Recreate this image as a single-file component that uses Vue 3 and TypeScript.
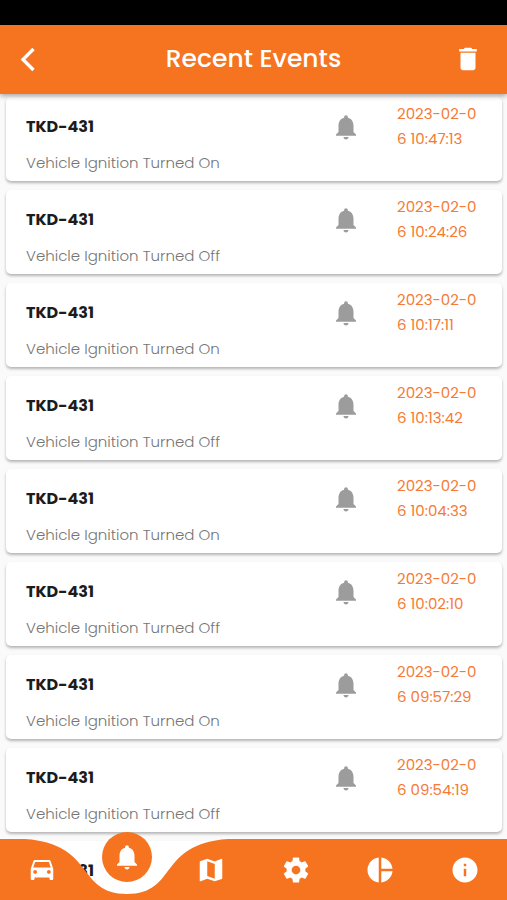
<script setup lang="ts">
interface VehicleEvent {
  id: number
  vehicle: string
  message: string
  time: string
}

const times: string[] = [
  '10:47:13', '10:24:26', '10:17:11', '10:13:42', '10:04:33',
  '10:02:10', '09:57:29', '09:54:19', '09:51:05',
]

const events: VehicleEvent[] = times.map((time, i) => ({
  id: i,
  vehicle: 'TKD-431',
  message: `Vehicle Ignition Turned ${i % 2 === 0 ? 'On' : 'Off'}`,
  time: `2023-02-06 ${time}`,
}))

const bell =
  'M12 22c1.1 0 2-.9 2-2h-4c0 1.1.9 2 2 2zm6-6v-5c0-3.07-1.63-5.64-4.5-6.32V4c0-.83-.67-1.5-1.5-1.5s-1.5.67-1.5 1.5v.68C7.64 5.36 6 7.92 6 11v5l-2 2v1h16v-1l-2-2z'

interface Tab {
  label: string
  icon: string
  active?: boolean
}

const tabs: Tab[] = [
  {
    label: 'Vehicles',
    icon: 'M18.92 5.01C18.72 4.42 18.16 4 17.5 4h-11c-.66 0-1.21.42-1.42 1.01L3 11v8c0 .55.45 1 1 1h1c.55 0 1-.45 1-1v-1h12v1c0 .55.45 1 1 1h1c.55 0 1-.45 1-1v-8l-2.08-5.99zM6.5 15c-.83 0-1.5-.67-1.5-1.5S5.67 12 6.5 12s1.5.67 1.5 1.5S7.33 15 6.5 15zm11 0c-.83 0-1.5-.67-1.5-1.5s.67-1.5 1.5-1.5 1.5.67 1.5 1.5-.67 1.5-1.5 1.5zM5 10l1.5-4.5h11L19 10H5z',
  },
  { label: 'Events', icon: bell, active: true },
  {
    label: 'Map',
    icon: 'M20.5 3l-.16.03L15 5.1 9 3 3.36 4.9c-.21.07-.36.25-.36.48V20.5c0 .28.22.5.5.5l.16-.03L9 18.9l6 2.1 5.64-1.9c.21-.07.36-.25.36-.48V3.5c0-.28-.22-.5-.5-.5zM15 19l-6-2.11V5l6 2.11V19z',
  },
  {
    label: 'Settings',
    icon: 'M19.43 12.98c.04-.32.07-.64.07-.98s-.03-.66-.07-.98l2.11-1.65c.19-.15.24-.42.12-.64l-2-3.46c-.12-.22-.39-.3-.61-.22l-2.49 1c-.52-.4-1.08-.73-1.69-.98l-.38-2.65C14.46 2.18 14.25 2 14 2h-4c-.25 0-.46.18-.49.42l-.38 2.65c-.61.25-1.17.59-1.69.98l-2.49-1c-.23-.09-.49 0-.61.22l-2 3.46c-.13.22-.07.49.12.64l2.11 1.65c-.04.32-.07.65-.07.98s.03.66.07.98l-2.11 1.65c-.19.15-.24.42-.12.64l2 3.46c.12.22.39.3.61.22l2.49-1c.52.4 1.08.73 1.69.98l.38 2.65c.03.24.24.42.49.42h4c.25 0 .46-.18.49-.42l.38-2.65c.61-.25 1.17-.59 1.69-.98l2.49 1c.23.09.49 0 .61-.22l2-3.46c.12-.22.07-.49-.12-.64l-2.11-1.65zM12 15.5c-1.93 0-3.5-1.57-3.5-3.5s1.57-3.5 3.5-3.5 3.5 1.57 3.5 3.5-1.57 3.5-3.5 3.5z',
  },
  {
    label: 'Reports',
    icon: 'M11 2v20c-5.07-.5-9-4.79-9-10s3.93-9.5 9-10zm2.03 0v8.99H22c-.47-4.74-4.24-8.52-8.97-8.99zm0 11.01V22c4.74-.47 8.5-4.25 8.97-8.99h-8.97z',
  },
  {
    label: 'Info',
    icon: 'M12 2C6.48 2 2 6.48 2 12s4.48 10 10 10 10-4.48 10-10S17.52 2 12 2zm1 15h-2v-6h2v6zm0-8h-2V7h2v2z',
  },
]
</script>

<template>
  <div class="page">
    <div class="status-bar"></div>
    <header class="app-bar">
      <button class="icon-button" type="button" aria-label="Back">
        <svg viewBox="0 0 28 28" width="28" height="28" aria-hidden="true">
          <path d="M19.5 4 9 14.5 19.500 25" fill="none" stroke="currentColor" stroke-width="3.4" />
        </svg>
      </button>
      <h1 class="title">Recent Events</h1>
      <button class="icon-button end" type="button" aria-label="Delete events">
        <svg viewBox="0 0 24 24" width="30" height="30" fill="currentColor" aria-hidden="true">
          <path d="M6 19c0 1.1.9 2 2 2h8c1.1 0 2-.9 2-2V7H6v12zM19 4h-3.5l-1-1h-5l-1 1H5v2h14V4z" />
        </svg>
      </button>
    </header>

    <main class="events">
      <article v-for="event in events" :key="event.id" class="card">
        <div class="details">
          <h2 class="vehicle">{{ event.vehicle }}</h2>
          <p class="message">{{ event.message }}</p>
        </div>
        <svg class="bell" viewBox="0 0 24 24" width="30" height="30" fill="currentColor" aria-hidden="true">
          <path :d="bell" />
        </svg>
        <time class="time">{{ event.time }}</time>
      </article>
    </main>

    <nav class="tab-bar" aria-label="Main">
      <svg class="tab-shape" viewBox="0 0 507 61" preserveAspectRatio="none" aria-hidden="true">
        <path d="M0 0H25C96 5 76 55 127 55S157 5 228 0H507V61H0Z" fill="currentColor" />
      </svg>
      <button
        v-for="tab in tabs"
        :key="tab.label"
        class="tab"
        :class="{ active: tab.active }"
        type="button"
        :aria-label="tab.label"
      >
        <span class="tab-icon">
          <svg viewBox="0 0 24 24" width="30" height="30" fill="currentColor" aria-hidden="true">
            <path :d="tab.icon" />
          </svg>
        </span>
      </button>
    </nav>
  </div>
</template>

<style>
body {
  margin: 0;
  background: #fafafa;
}
</style>

<style scoped>
.page {
  position: relative;
  display: flex;
  flex-direction: column;
  height: 100vh;
  overflow: hidden;
  background: #fafafa;
  font-family: Poppins, Inter, "Liberation Sans", sans-serif;
}

.status-bar {
  flex: none;
  height: 25px;
  background: #000;
}

.app-bar {
  z-index: 1;
  flex: none;
  display: grid;
  grid-template-columns: 1fr auto 1fr;
  align-items: center;
  height: 69px;
  padding: 0 24px 2px 14px;
  box-sizing: border-box;
  background: #f67320;
  color: #fff;
  box-shadow: 0 2px 5px rgba(0, 0, 0, 0.35);
}

.icon-button {
  display: flex;
  justify-self: start;
  padding: 0;
  border: 0;
  background: none;
  color: inherit;
  cursor: pointer;
}

.end {
  justify-self: end;
}

.title {
  margin: 0 0 0 10px;
  font-size: 25px;
  line-height: 32px;
  font-weight: 500;
}

.events {
  flex: 1;
  min-height: 0;
  display: flex;
  flex-direction: column;
  gap: 9px;
  padding: 3px 5px 61px 6px;
  overflow-y: auto;
  scrollbar-width: none;
}

.card {
  flex: none;
  display: flex;
  align-items: flex-start;
  height: 84px;
  box-sizing: border-box;
  padding: 4px 20px 0;
  border-radius: 5px;
  background: #fff;
  box-shadow: 0 2px 3px rgba(0, 0, 0, 0.28);
}

.details {
  flex: 1;
  padding-top: 14px;
}

.vehicle {
  margin: 0;
  color: #1c1c1c;
  font-size: 16px;
  line-height: 24px;
  font-weight: 700;
}

.message {
  margin: 12px 0 0;
  color: #757575;
  font-size: 15px;
  line-height: 24px;
  font-weight: 300;
}

.bell {
  margin: 11px 36px 0 0;
  color: #9c9c9c;
}

.time {
  width: 85px;
  color: #f67a35;
  font-size: 15px;
  line-height: 25px;
  word-break: break-all;
}

.tab-bar {
  position: absolute;
  z-index: 2;
  right: 0;
  bottom: 0;
  left: 0;
  display: flex;
  height: 61px;
}

.tab-shape {
  position: absolute;
  width: 100%;
  height: 100%;
  color: #f67320;
}

.tab {
  position: relative;
  flex: 1;
  display: flex;
  align-items: center;
  justify-content: center;
  padding: 0;
  border: 0;
  background: none;
  color: #fff;
  cursor: pointer;
}

.tab-icon {
  display: flex;
  align-items: center;
  justify-content: center;
  width: 50px;
  height: 50px;
  border-radius: 50%;
}

.active {
  align-items: flex-start;
}

.active .tab-icon {
  margin-top: -7px;
  background: #f67320;
}
</style>
